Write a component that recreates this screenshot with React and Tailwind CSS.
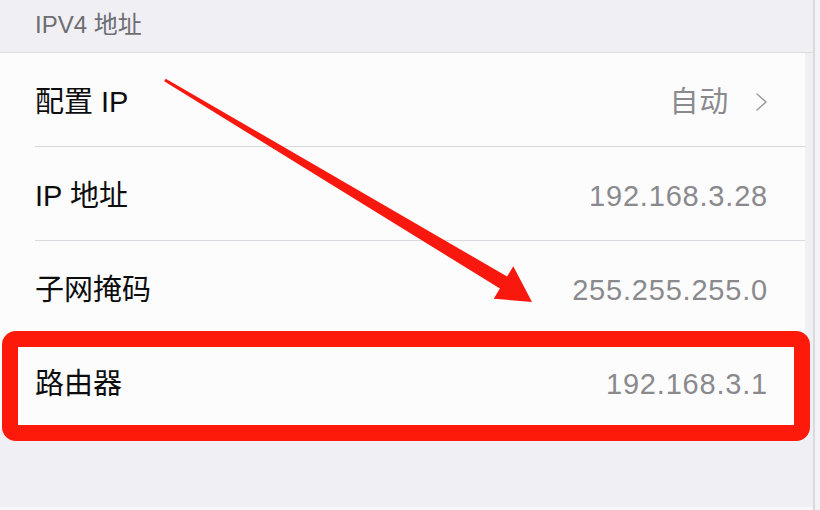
import React from "react";

const FONT = { fontFamily: '"Liberation Sans", "Noto Sans CJK SC", sans-serif' };

function Row({ label, value, chevron, last }) {
  return (
    <div className="relative flex h-[94px] items-center pl-[35px] pr-[37px] pt-[4px]">
      <span className="text-[29px] leading-none text-[#0d0d0d]">{label}</span>
      <div className="ml-auto flex items-center">
        <span className="text-[29px] leading-none tracking-[0.8px] text-[#8a8a8e]">{value}</span>
        {chevron && (
          <svg width="14" height="20" viewBox="0 0 14 20" className="ml-[26px] mr-[-1px]">
            <path d="M2 2 L11 10 L2 18" fill="none" stroke="#9d9da2" strokeWidth="1.6" strokeLinecap="round" strokeLinejoin="round" />
          </svg>
        )}
      </div>
      {!last && <div className="absolute bottom-0 left-[35px] right-0 h-px bg-[#d9d9dd]" />}
    </div>
  );
}

export default function App() {
  return (
    <div className="relative flex h-[510px] w-[820px] overflow-hidden bg-[#efeff4]" style={FONT}>
      <div className="flex w-[813px] flex-col">
        <div className="flex h-[53px] items-center pb-[2px] pl-[35px] border-b border-[#dcdce0]">
          <span className="text-[24px] leading-none text-[#6d6d72]">IPV4 地址</span>
        </div>
        <div className="mr-[8px] bg-[#fcfcfd]">
          <Row label="配置 IP" value="自动" chevron />
          <Row label="IP 地址" value="192.168.3.28" />
          <Row label="子网掩码" value="255.255.255.0" />
          <Row label="路由器" value="192.168.3.1" last />
        </div>
        <div className="flex-1" />
        <div className="h-[3px] bg-[#f8f8fa]" />
      </div>
      <div className="w-[2px] bg-[#d9d9de]" />
      <div className="flex-1 bg-[#f3f3f6]" />

      <svg className="pointer-events-none absolute left-0 top-0" width="820" height="510" viewBox="0 0 820 510">
        <polygon
          points="165.8,78.7 507.1,276.5 513.3,266.3 532,302 493.7,298.7 499.9,288.5 164.2,81.3"
          fill="#f8180e"
        />
      </svg>

      <div className="pointer-events-none absolute left-[2px] top-[331px] h-[110px] w-[808px] rounded-[14px] border-[16px] border-[#fe1a0a]" />
    </div>
  );
}
